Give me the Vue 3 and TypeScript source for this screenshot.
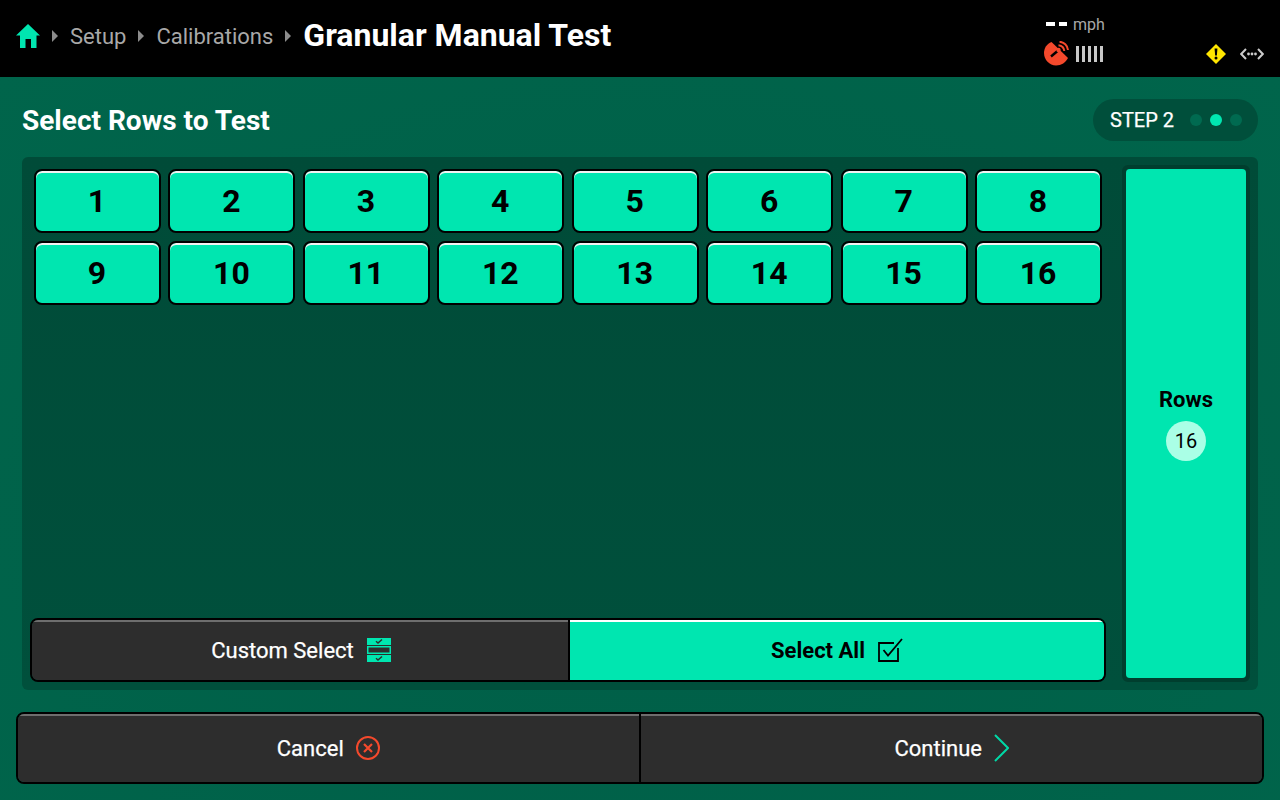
<script setup lang="ts">
const rows: number[] = Array.from({ length: 16 }, (_, i) => i + 1)
</script>

<template>
  <div class="page">
    <header class="top">
      <nav class="crumbs">
        <svg class="home" width="24" height="24" viewBox="0 0 24 24"><path d="M12 0 24 11.500H20.500V24H15V15H9.500V24H4V11.500H0Z" fill="#00e6b0" /></svg>
        <i class="caret"></i>
        <span class="crumb">Setup</span>
        <i class="caret"></i>
        <span class="crumb">Calibrations</span>
        <i class="caret"></i>
        <h1>Granular Manual Test</h1>
      </nav>
      <div class="status">
        <div class="speed">
          <div class="speed-line"><i class="dash"></i><i class="dash"></i><span>mph</span></div>
          <div class="signal">
            <svg width="25" height="25" viewBox="0 0 25 25">
              <path d="M7.500 1C3 2.800 0 7 0 12C0 18.800 5.400 24.500 12 24.500C17.400 24.500 21.800 21.500 24 17Z" fill="#f4492c" />
              <path d="M7 15.500 13.500 10" stroke="#000" stroke-width="2.400" />
              <circle cx="14.500" cy="9" r="2.200" fill="#f4492c" />
              <path d="M14.500 4.200A6.500 6.500 0 0 1 20.300 10M15.500 0.800A9 9 0 0 1 24 9" fill="none" stroke="#f4492c" stroke-width="2" />
            </svg>
            <div class="bars"><i></i><i></i><i></i><i></i><i></i></div>
          </div>
        </div>
        <svg class="warn" width="20" height="20" viewBox="0 0 20 20">
          <path d="M10 0 20 10 10 20 0 10Z" fill="#ffe600" />
          <path d="M8.600 4.500H11.400L10.900 11.500H9.100Z" fill="#000" />
          <circle cx="10" cy="14" r="1.500" fill="#000" />
        </svg>
        <svg class="link" width="24" height="14" viewBox="0 0 24 14">
          <path d="M6 2 1.200 7 6 12M18 2 22.800 7 18 12" fill="none" stroke="#ccc" stroke-width="2" />
          <circle cx="8.500" cy="7" r="1.400" fill="#ccc" /><circle cx="12" cy="7" r="1.400" fill="#ccc" /><circle cx="15.500" cy="7" r="1.400" fill="#ccc" />
        </svg>
      </div>
    </header>

    <main class="body">
      <div class="title-row">
        <h2>Select Rows to Test</h2>
        <div class="step">
          <span>STEP 2</span>
          <div class="dots"><i></i><i class="on"></i><i></i></div>
        </div>
      </div>

      <section class="panel">
        <div class="left">
          <div class="grid">
            <button v-for="r in rows" :key="r" class="row-btn">{{ r }}</button>
          </div>
          <div class="seg">
            <button class="seg-btn dark">
              <span>Custom Select</span>
              <svg width="24" height="24" viewBox="0 0 24 24">
                <rect x="0" y="0" width="24" height="7" fill="#00e6b0" />
                <rect x="0.750" y="8.750" width="22.500" height="6.500" fill="none" stroke="#00e6b0" stroke-width="1.500" />
                <rect x="0" y="17" width="24" height="7" fill="#00e6b0" />
                <path d="M9 3.300 11 5 15 1.500M9 20.300 11 22 15 18.500" fill="none" stroke="#2d2d2d" stroke-width="1.500" />
              </svg>
            </button>
            <button class="seg-btn light">
              <span>Select All</span>
              <svg width="25" height="24" viewBox="0 0 25 24">
                <path d="M20 10V23H1V5H16" fill="none" stroke="#000" stroke-width="1.800" />
                <path d="M5.500 12 10 17.500 24 1" fill="none" stroke="#000" stroke-width="1.800" />
              </svg>
            </button>
          </div>
        </div>
        <aside class="rows-wrap">
          <div class="rows-card">
            <strong>Rows</strong>
            <span class="count">16</span>
          </div>
        </aside>
      </section>

      <footer class="actions">
        <button class="act">
          <span>Cancel</span>
          <svg width="24" height="24" viewBox="0 0 24 24">
            <circle cx="12" cy="12" r="11" fill="none" stroke="#f4492c" stroke-width="2" />
            <path d="M8 8 16 16M16 8 8 16" stroke="#f4492c" stroke-width="2.200" />
          </svg>
        </button>
        <button class="act">
          <span>Continue</span>
          <svg width="15" height="28" viewBox="0 0 15 28">
            <path d="M1 1 14 14 1 27" fill="none" stroke="#00d8a6" stroke-width="2" />
          </svg>
        </button>
      </footer>
    </main>
  </div>
</template>

<style>
html, body { margin: 0; background: #000; }
</style>

<style scoped>
.page {
  width: 1280px;
  height: 800px;
  display: flex;
  flex-direction: column;
  overflow: hidden;
  font-family: Roboto, "Liberation Sans", sans-serif;
}
button { font-family: inherit; cursor: pointer; padding: 0; }
.top {
  height: 77px;
  flex: none;
  background: #000;
  display: flex;
  justify-content: space-between;
}
.crumbs { display: flex; align-items: center; padding: 0 0 5px 16px; }
.home { margin-right: 12px; }
.caret {
  width: 0;
  height: 0;
  border-left: 6px solid #8c8c8c;
  border-top: 6px solid transparent;
  border-bottom: 6px solid transparent;
  margin: 0 12px;
}
.home + .caret { margin-left: 0; }
.crumb { font-size: 22px; color: #a8a8a8; }
h1 { margin: 0 0 2px; font-size: 32px; line-height: 36px; font-weight: 700; color: #fff; }
.status { display: flex; padding-right: 16px; }
.speed { width: 150px; padding-top: 15px; margin-right: 12px; }
.speed-line { display: flex; align-items: center; height: 18px; padding-left: 2px; color: #a8a8a8; font-size: 16px; }
.dash { width: 8.500px; height: 4px; background: #fff; margin-right: 4px; }
.speed-line span { margin-left: 2px; }
.signal { display: flex; align-items: center; gap: 7px; margin-top: 8px; }
.bars { display: flex; gap: 3px; }
.bars i { width: 3px; height: 16px; background: #c8c8c8; display: block; }
.warn { margin-top: 44px; margin-right: 14px; }
.link { margin-top: 47px; }

.body {
  flex: 1;
  min-height: 0;
  display: flex;
  flex-direction: column;
  background: radial-gradient(ellipse at 50% 60%, #005e47 0%, #00654b 100%);
}
.title-row {
  height: 80px;
  flex: none;
  display: flex;
  align-items: center;
  justify-content: space-between;
  padding: 6px 22px 0;
  box-sizing: border-box;
}
h2 { margin: 0; font-size: 28px; font-weight: 700; color: #fff; }
.step {
  width: 165px;
  height: 42px;
  border-radius: 21px;
  background: #004f3b;
  display: flex;
  align-items: center;
  padding-left: 17px;
  box-sizing: border-box;
  color: #fff;
  font-size: 20px;
  -webkit-text-stroke: 0.25px #fff;
}
.dots { display: flex; gap: 8px; margin-left: 15.500px; }
.dots i { width: 12px; height: 12px; border-radius: 50%; background: #006a50; display: block; }
.dots i.on { background: #00e6b0; }

.panel {
  height: 533px;
  flex: none;
  margin: 0 22px;
  border-radius: 6px;
  background: linear-gradient(#004b38, #00503c);
  display: flex;
  padding: 8px;
  box-sizing: border-box;
  gap: 16px;
}
.left { width: 1076px; display: flex; flex-direction: column; justify-content: space-between; }
.grid {
  margin: 4px 4px 0;
  display: grid;
  grid-template-columns: repeat(8, 1fr);
  grid-auto-rows: 64px;
  gap: 8px 7.500px;
}
.row-btn {
  border: 2px solid #000;
  border-radius: 8px;
  padding-right: 1px;
  background: #00e6b0;
  box-shadow: inset 0 2px 0 #f2f2f2;
  font-size: 32px;
  font-weight: 700;
  color: #000;
}
.seg {
  height: 64px;
  display: flex;
  border: 2px solid #000;
  border-radius: 8px;
  overflow: hidden;
  box-sizing: border-box;
}
.seg-btn {
  flex: 1 1 0;
  border: none;
  display: flex;
  align-items: center;
  justify-content: center;
  gap: 13px;
  font-size: 22px;
}
.seg-btn.dark {
  background: #2d2d2d;
  color: #fff;
  -webkit-text-stroke: 0.25px #fff;
  padding-left: 2px;
  box-shadow: inset 0 2px 0 #6e6e6e;
}
.seg-btn.light {
  background: #00e6b0;
  color: #000;
  font-weight: 700;
  border-left: 2px solid #000;
  box-shadow: inset 0 2px 0 #fff;
}
.rows-wrap {
  width: 128px;
  height: 517px;
  box-sizing: border-box;
  border: 4px solid #003e2e;
  border-radius: 6px;
}
.rows-card {
  height: 100%;
  border-radius: 4px;
  background: #00e6b0;
  display: flex;
  flex-direction: column;
  align-items: center;
  padding-top: 218px;
  box-sizing: border-box;
}
.rows-card strong { font-size: 22px; line-height: 26px; color: #000; }
.count {
  width: 40px;
  height: 40px;
  margin-top: 8px;
  border-radius: 50%;
  background: #aaffe6;
  display: flex;
  align-items: center;
  justify-content: center;
  font-size: 20px;
  color: #000;
}

.actions {
  height: 72px;
  flex: none;
  margin: 22px 16px 0;
  display: flex;
  border: 2px solid #000;
  border-radius: 8px;
  overflow: hidden;
  box-sizing: border-box;
}
.act {
  flex: 1;
  border: none;
  background: #2d2d2d;
  color: #fff;
  font-size: 22px;
  -webkit-text-stroke: 0.25px #fff;
  display: flex;
  align-items: center;
  justify-content: center;
  gap: 12px;
  box-shadow: inset 0 2px 0 #6e6e6e;
}
.act + .act { border-left: 2px solid #000; padding-left: 1px; }
</style>
